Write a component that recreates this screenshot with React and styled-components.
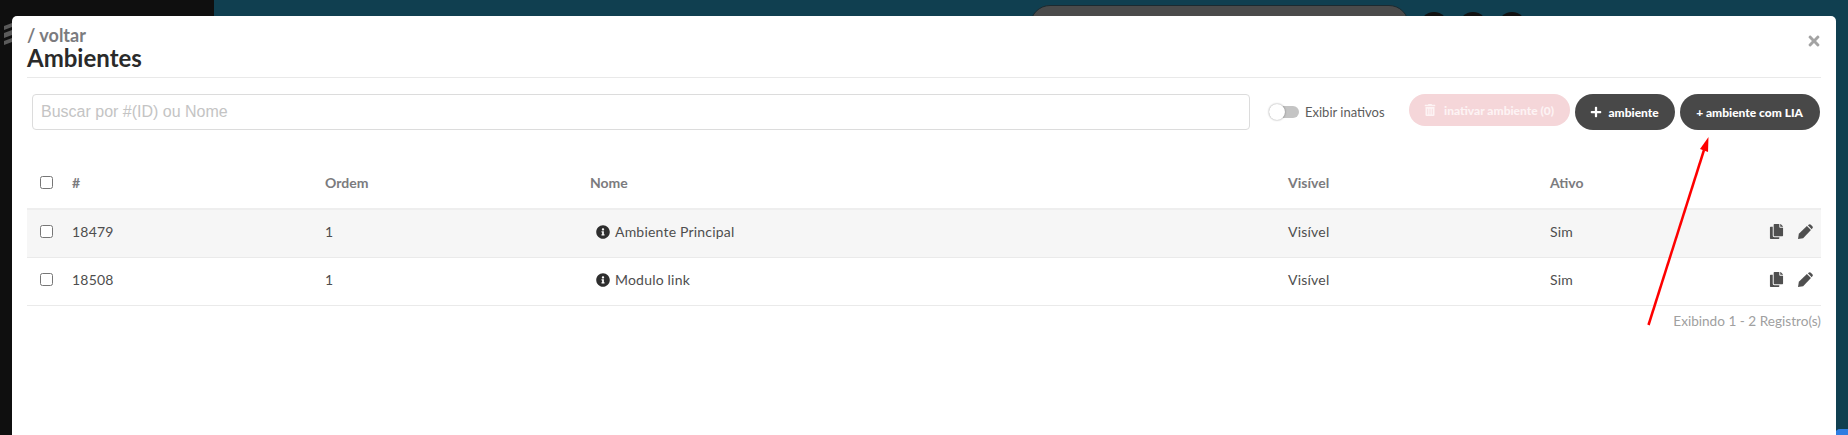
import React from "react";
import styled, { createGlobalStyle } from "styled-components";
import { FaCopy, FaInfoCircle, FaPlus, FaTimes, FaTrashAlt } from "react-icons/fa";

const GlobalStyle = createGlobalStyle`
  html, body {
    margin: 0;
    height: 435px;
    overflow: hidden;
    background: #103f50;
    font-family: Lato, "Noto Sans", sans-serif;
  }
  * { box-sizing: border-box; }
`;

const Backdrop = styled.div`
  position: relative;
  display: flex;
  width: 1848px;
  height: 435px;
  overflow: hidden;
  background: #103f50;
`;

const Sidebar = styled.aside`
  width: 214px;
  padding: 23px 0 0 3px;
  background: #0f0f0f;
`;

const TopBar = styled.div`
  display: flex;
  gap: 11px;
  margin-left: 816px;
  padding-top: 5px;
`;

const SearchPill = styled.div`
  width: 379px;
  height: 40px;
  border: 1px solid #1c2a30;
  border-radius: 22px;
  background: #4b4b4b;
`;

const Round = styled.div`
  width: 28px;
  height: 28px;
  margin-top: 7px;
  border-radius: 50%;
  background: #111;
`;

const Modal = styled.section`
  position: absolute;
  top: 16px;
  left: 12px;
  width: 1824px;
  height: 440px;
  padding: 10px 15px 0;
  border-radius: 5px;
  background: #fff;
`;

const CloseButton = styled.button`
  position: absolute;
  top: 17px;
  right: 14px;
  padding: 0;
  border: 0;
  background: none;
  color: #a3a3a3;
  font-size: 16px;
  line-height: 1;
`;

const Header = styled.header`
  height: 52px;
  border-bottom: 1px solid #e9e9e9;
`;

const BackLink = styled.a`
  display: block;
  height: 17px;
  color: #7b7b7e;
  font-size: 18px;
  font-weight: 700;
  line-height: 18px;
`;

const Title = styled.h1`
  margin: 0;
  color: #2a2a2a;
  font-size: 24px;
  font-weight: 700;
  line-height: 30px;
`;

const Toolbar = styled.div`
  display: flex;
  align-items: flex-start;
  padding: 16px 0 0 5px;
`;

const SearchInput = styled.input`
  width: 1218px;
  height: 36px;
  padding: 0 8px;
  border: 1px solid #dcdcdc;
  border-radius: 4px;
  font-family: "Liberation Sans", sans-serif;
  font-size: 16px;
  &::placeholder { color: #c4c4c4; }
`;

const ToggleLabel = styled.label`
  display: flex;
  align-items: center;
  gap: 6px;
  height: 36px;
  margin: 0 24px 0 19px;
  color: #5c5c5c;
  font-size: 13px;
`;

const ToggleTrack = styled.span`
  position: relative;
  width: 30px;
  height: 12px;
  border-radius: 6px;
  background: #c4c4c4;
`;

const ToggleKnob = styled.span`
  position: absolute;
  top: -2px;
  left: 0;
  width: 16px;
  height: 16px;
  border-radius: 50%;
  background: #fff;
  box-shadow: 0 0 2px rgba(0, 0, 0, 0.45);
`;

const PillButton = styled.button`
  display: flex;
  align-items: center;
  justify-content: center;
  gap: ${(p) => p.$gap || 6}px;
  width: ${(p) => p.$width}px;
  height: ${(p) => (p.$faded ? 32 : 36)}px;
  margin-left: ${(p) => p.$left || 0}px;
  padding: 0;
  border: 0;
  border-radius: 18px;
  background: ${(p) => (p.$faded ? "#f5d6d9" : "#484848")};
  color: ${(p) => (p.$faded ? "#fdf3f4" : "#fff")};
  font-family: Lato, sans-serif;
  font-size: 12px;
  font-weight: 900;
`;

const Table = styled.div`
  margin-top: 28px;
`;

const Row = styled.div`
  display: grid;
  grid-template-columns: 32px 253px 265px 698px 262px 1fr 52px;
  align-items: center;
  height: 48px;
  padding: 0 8px 4px 13px;
  border-bottom: 1px solid #eaeaea;
  background: ${(p) => (p.$shaded ? "#f6f6f6" : "transparent")};
  color: #4e4e4e;
  font-size: 14px;
  letter-spacing: 0.2px;
`;

const HeadRow = styled(Row)`
  height: 52px;
  padding-bottom: 2px;
  border-bottom: 2px solid #eeeeee;
  color: #7b7b7e;
  font-weight: 700;
  letter-spacing: 0;
`;

const Check = styled.input.attrs({ type: "checkbox" })`
  width: 13px;
  height: 13px;
  margin: 0;
`;

const NameCell = styled.span`
  display: flex;
  align-items: center;
  gap: 5px;
  padding-left: 6px;
  svg { color: #2e2e2e; font-size: 14px; }
`;

const Actions = styled.span`
  display: flex;
  justify-content: flex-end;
  align-items: center;
  gap: 14px;
  color: #4f4f4f;
  font-size: 15px;
`;

const Footer = styled.div`
  margin-top: 7px;
  color: #a0a0a0;
  font-size: 13.6px;
  text-align: right;
`;

const Arrow = styled.svg`
  position: absolute;
  top: 0;
  left: 0;
  width: 1848px;
  height: 435px;
  pointer-events: none;
`;

const BlueCorner = styled.div`
  position: absolute;
  top: 429px;
  left: 1835px;
  width: 13px;
  height: 6px;
  border-radius: 5px 0 0 0;
  background: #2f7de1;
`;

const PencilIcon = () => (
  <svg width="15" height="15" viewBox="0 0 14 14" fill="currentColor">
    <path d="M0 14 L0.8 9.2 L8.3 1.9 L12.1 5.7 L4.8 13.2 Z" />
    <path d="M9.2 1.2 L10.3 0.4 Q11.2 -0.2 12 0.6 L13.4 2 Q14.2 2.8 13.6 3.7 L12.8 4.9 Z" />
  </svg>
);

const rows = [
  { id: 18479, name: "Ambiente Principal", shaded: true },
  { id: 18508, name: "Modulo link", shaded: false },
];

export default function App() {
  return (
    <Backdrop>
      <GlobalStyle />
      <Sidebar>
        <svg width="10" height="22" viewBox="0 0 10 22">
          <path d="M1 3 L9 0 V4 L1 7 Z M1 10 L9 7 V12 L1 15 Z M1 18 L9 15 V19 L1 22 Z" fill="#5a5a5a" />
        </svg>
      </Sidebar>
      <TopBar>
        <SearchPill />
        <Round />
        <Round />
        <Round />
      </TopBar>
      <BlueCorner />
      <Modal>
        <CloseButton><FaTimes /></CloseButton>
        <Header>
          <BackLink>/ voltar</BackLink>
          <Title>Ambientes</Title>
        </Header>
        <Toolbar>
          <SearchInput placeholder="Buscar por #(ID) ou Nome" />
          <ToggleLabel>
            <ToggleTrack><ToggleKnob /></ToggleTrack>
            Exibir inativos
          </ToggleLabel>
          <PillButton $faded $width={161} $gap={8}><FaTrashAlt size={12} /> inativar ambiente (0)</PillButton>
          <PillButton $width={100} $left={5}><FaPlus size={12} /> ambiente</PillButton>
          <PillButton $width={140} $left={5}>+ ambiente com LIA</PillButton>
        </Toolbar>
        <Table>
          <HeadRow>
            <Check />
            <span>#</span>
            <span>Ordem</span>
            <span>Nome</span>
            <span>Visível</span>
            <span>Ativo</span>
            <span />
          </HeadRow>
          {rows.map((row) => (
            <Row key={row.id} $shaded={row.shaded}>
              <Check />
              <span>{row.id}</span>
              <span>1</span>
              <NameCell><FaInfoCircle /> {row.name}</NameCell>
              <span>Visível</span>
              <span>Sim</span>
              <Actions><FaCopy /><PencilIcon /></Actions>
            </Row>
          ))}
        </Table>
        <Footer>Exibindo 1 - 2 Registro(s)</Footer>
      </Modal>
      <Arrow viewBox="0 0 1848 435">
        <line x1="1648.5" y1="325" x2="1704" y2="150" stroke="#fe0000" strokeWidth="2.5" />
        <polygon points="1708.5,137 1708,152 1700,149" fill="#fe0000" />
      </Arrow>
    </Backdrop>
  );
}
